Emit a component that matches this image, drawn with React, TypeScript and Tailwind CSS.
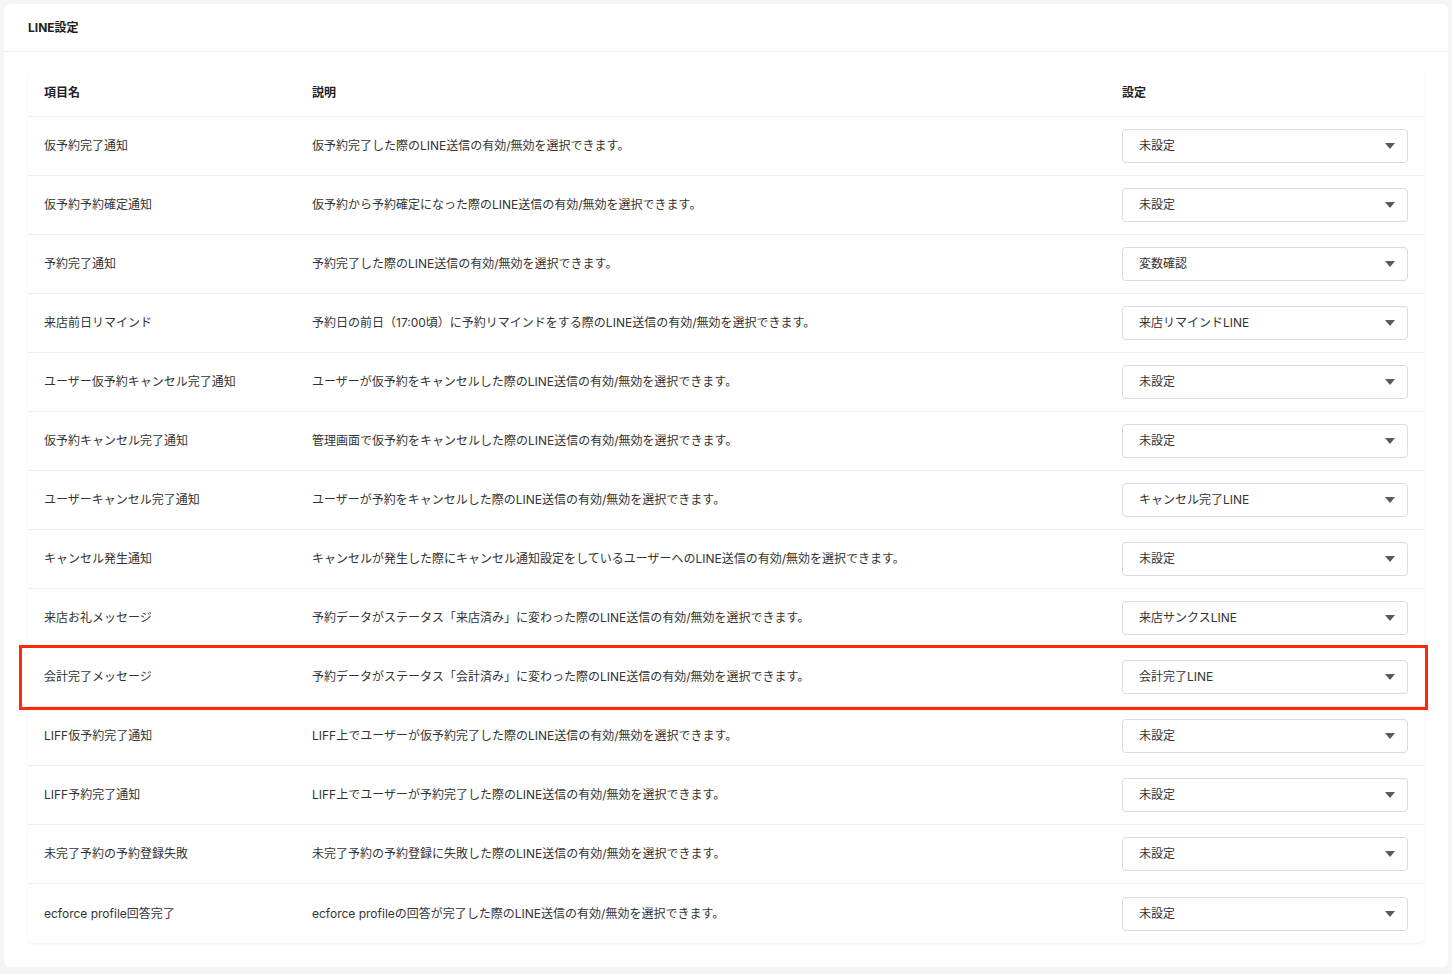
const rows: [string, string, string][] = [
  ['仮予約完了通知', '仮予約完了した際のLINE送信の有効/無効を選択できます。', '未設定'],
  ['仮予約予約確定通知', '仮予約から予約確定になった際のLINE送信の有効/無効を選択できます。', '未設定'],
  ['予約完了通知', '予約完了した際のLINE送信の有効/無効を選択できます。', '変数確認'],
  ['来店前日リマインド', '予約日の前日（17:00頃）に予約リマインドをする際のLINE送信の有効/無効を選択できます。', '来店リマインドLINE'],
  ['ユーザー仮予約キャンセル完了通知', 'ユーザーが仮予約をキャンセルした際のLINE送信の有効/無効を選択できます。', '未設定'],
  ['仮予約キャンセル完了通知', '管理画面で仮予約をキャンセルした際のLINE送信の有効/無効を選択できます。', '未設定'],
  ['ユーザーキャンセル完了通知', 'ユーザーが予約をキャンセルした際のLINE送信の有効/無効を選択できます。', 'キャンセル完了LINE'],
  ['キャンセル発生通知', 'キャンセルが発生した際にキャンセル通知設定をしているユーザーへのLINE送信の有効/無効を選択できます。', '未設定'],
  ['来店お礼メッセージ', '予約データがステータス「来店済み」に変わった際のLINE送信の有効/無効を選択できます。', '来店サンクスLINE'],
  ['会計完了メッセージ', '予約データがステータス「会計済み」に変わった際のLINE送信の有効/無効を選択できます。', '会計完了LINE'],
  ['LIFF仮予約完了通知', 'LIFF上でユーザーが仮予約完了した際のLINE送信の有効/無効を選択できます。', '未設定'],
  ['LIFF予約完了通知', 'LIFF上でユーザーが予約完了した際のLINE送信の有効/無効を選択できます。', '未設定'],
  ['未完了予約の予約登録失敗', '未完了予約の予約登録に失敗した際のLINE送信の有効/無効を選択できます。', '未設定'],
  ['ecforce profile回答完了', 'ecforce profileの回答が完了した際のLINE送信の有効/無効を選択できます。', '未設定'],
];

export default function App() {
  return (
    <div
      className="min-h-[974px] bg-[#f4f5f7] p-1 text-[12px] text-[#333]"
      style={{ fontFamily: 'Inter, "Noto Sans CJK JP", sans-serif' }}
    >
      <div className="rounded-md bg-white pb-6">
        <div className="flex h-12 items-center border-b border-[#eceef2] px-6 font-bold text-[#222]">LINE設定</div>
        <div className="mx-6 mt-[18px] rounded-md bg-white shadow-[0_1px_3px_rgba(0,0,0,0.06)]">
          <div className="flex h-[47px] items-center border-b border-[#eceef2] font-bold text-[#222]">
            <div className="w-[284px] pl-4">項目名</div>
            <div className="flex-1">説明</div>
            <div className="w-[302px]">設定</div>
          </div>
          {rows.map(([name, desc, val], i) => (
            <div
              key={name}
              className={`relative flex h-[59px] items-center ${i < rows.length - 1 ? 'border-b border-[#eceef2]' : ''}`}
            >
              {i === 9 && (
                <div className="pointer-events-none absolute -left-[9px] -right-[4px] -top-[3px] -bottom-[4px] border-[3px] border-[#ff2a0a]" />
              )}
              <div className="w-[284px] pl-4">{name}</div>
              <div className="flex-1">{desc}</div>
              <div className="w-[302px] pr-4">
                <div className="flex h-[34px] items-center justify-between rounded border border-[#d8dbe0] pl-4 pr-3">
                  <span>{val}</span>
                  <svg width="10" height="6" viewBox="0 0 10 6"><path d="M0 0h10L5 6z" fill="#555b66" /></svg>
                </div>
              </div>
            </div>
          ))}
        </div>
      </div>
    </div>
  );
}
